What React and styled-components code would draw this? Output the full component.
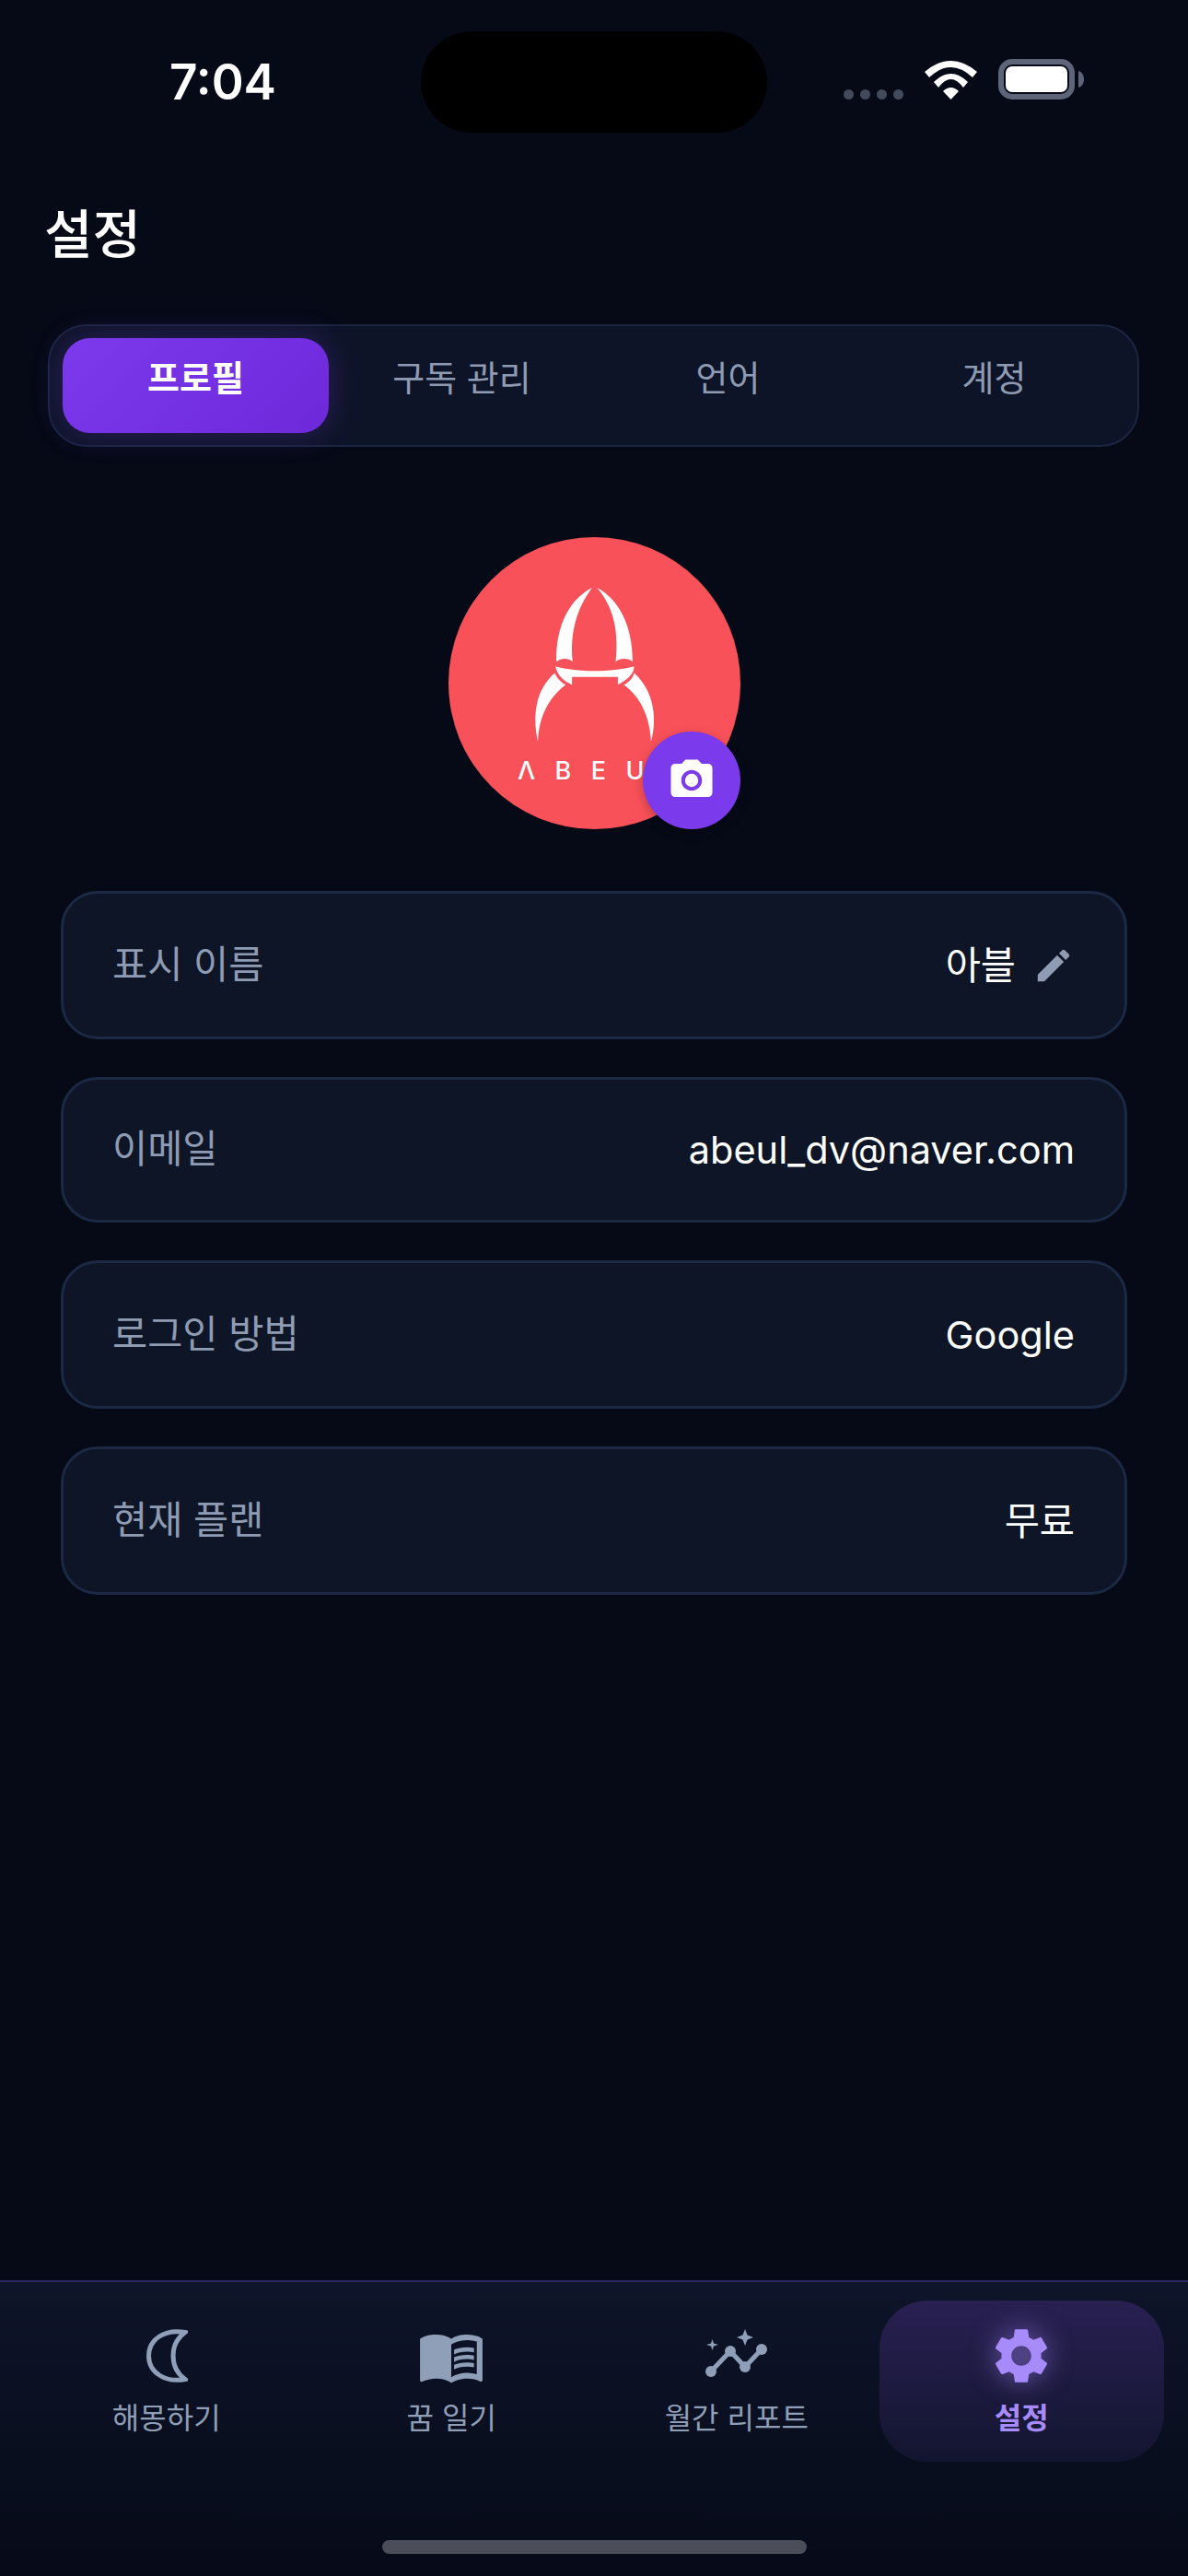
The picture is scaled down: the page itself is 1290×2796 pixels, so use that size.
import styled, { createGlobalStyle } from 'styled-components';
import { MdEdit, MdMenuBook, MdPhotoCamera, MdSettings } from 'react-icons/md';

const GlobalStyle = createGlobalStyle`
  html, body {
    margin: 0;
    padding: 0;
    background: #060a17;
  }
  * {
    box-sizing: border-box;
  }
  body {
    font-family: Inter, "Noto Sans CJK KR", sans-serif;
  }
`;

const Page = styled.div`
  width: 1290px;
  height: 2796px;
  background: #060a17;
  display: flex;
  flex-direction: column;
  overflow: hidden;
`;

const StatusBar = styled.div`
  display: grid;
  grid-template-columns: 457px 376px 1fr;
  align-items: center;
  padding-top: 34px;
  height: 144px;
`;

const Time = styled.div`
  padding-left: 184px;
  font-size: 53px;
  line-height: 60px;
  font-weight: 600;
  color: #fff;
`;

const Island = styled.div`
  height: 110px;
  border-radius: 55px;
  background: #000;
`;

const StatusIcons = styled.div`
  display: flex;
  align-items: flex-end;
  padding-left: 83px;
  height: 44px;
  margin-bottom: 6px;
`;

const Dots = styled.div`
  display: flex;
  gap: 7px;
  margin-right: 23px;
`;

const Dot = styled.span`
  width: 11px;
  height: 11px;
  border-radius: 50%;
  background: #434a5a;
`;

const Wifi = styled.svg`
  display: block;
  width: 57px;
  height: 42px;
  margin-right: 23px;
`;

const Battery = styled.svg`
  display: block;
  width: 94px;
  height: 44px;
`;

const Title = styled.h1`
  margin: 81px 0 0 48px;
  font-size: 57px;
  line-height: 60px;
  font-weight: 500;
  color: #fff;
`;

const Tabs = styled.div`
  display: grid;
  grid-template-columns: repeat(4, 289px);
  margin: 67px 0 0 52px;
  width: 1185px;
  height: 133px;
  padding: 13px 14px;
  background: #0e1428;
  border: 2px solid #1c2542;
  border-radius: 42px;
`;

const Tab = styled.div`
  display: flex;
  align-items: center;
  justify-content: center;
  padding-bottom: 17px;
  font-size: 38px;
  line-height: 48px;
  font-weight: ${(p) => (p.$active ? 700 : 400)};
  color: ${(p) => (p.$active ? '#fff' : '#8f9bb2')};
  border-radius: 30px;
  background: ${(p) => (p.$active ? 'linear-gradient(135deg, #7c3aed, #6d28d9)' : 'transparent')};
  box-shadow: ${(p) => (p.$active ? '0 0 32px rgba(124, 58, 237, 0.28)' : 'none')};
`;

const AvatarWrap = styled.div`
  position: relative;
  width: 317px;
  height: 317px;
  margin: 98px auto 0;
`;

const Avatar = styled.div`
  width: 100%;
  height: 100%;
  border-radius: 50%;
  background: #f95159;
  display: flex;
  flex-direction: column;
  align-items: center;
  padding-top: 55px;
`;

const LogoMark = styled.svg`
  display: block;
  width: 131px;
  height: 167px;
`;

const LogoText = styled.div`
  margin: 17px 7px 0 0;
  font-size: 27px;
  line-height: 30px;
  font-weight: 500;
  letter-spacing: 21.5px;
  color: #fff;
  white-space: nowrap;
`;

const CameraButton = styled.div`
  position: absolute;
  right: 0;
  bottom: 0;
  width: 106px;
  height: 106px;
  border-radius: 50%;
  background: #7c3aed;
  display: flex;
  align-items: center;
  justify-content: center;
  color: #fff;
  font-size: 54px;
  box-shadow: 0 4px 12px rgba(0, 0, 0, 0.25);

  svg {
    display: block;
  }
`;

const Rows = styled.div`
  display: flex;
  flex-direction: column;
  gap: 41px;
  margin: 67px 66px 0;
`;

const Row = styled.div`
  height: ${(p) => p.$h || 161}px;
  display: flex;
  align-items: center;
  justify-content: space-between;
  padding: 0 54px 0 53px;
  background: #0d1526;
  border: 3px solid #1c2945;
  border-radius: 40px;
`;

const Label = styled.div`
  font-size: 41.5px;
  line-height: 50px;
  color: #8f9bb2;
  margin-top: -2px;
`;

const Value = styled.div`
  display: flex;
  align-items: center;
  gap: 18px;
  font-size: 41.5px;
  line-height: 50px;
  color: #fff;
`;

const EditIcon = styled(MdEdit)`
  display: block;
  font-size: 46px;
  color: #8f9bb2;
`;

const Spacer = styled.div`
  flex: 1;
`;

const Nav = styled.div`
  position: relative;
  height: 321px;
  display: grid;
  grid-template-columns: repeat(4, 1fr);
  grid-template-rows: 175px;
  padding: 20px 26px 0;
  border-top: 2px solid #2a2960;
  background: linear-gradient(180deg, #0e1429 0%, #060a18 100%);
`;

const NavItem = styled.div`
  display: flex;
  flex-direction: column;
  align-items: center;
  padding-top: 30px;
  border-radius: 52px;
  background: ${(p) => (p.$active ? 'linear-gradient(180deg, #292052 0%, #12152f 100%)' : 'transparent')};
  color: ${(p) => (p.$active ? '#a78bfa' : '#8f9fb8')};
`;

const NavIcon = styled.div`
  height: 60px;
  display: flex;
  align-items: center;
  justify-content: center;
  filter: ${(p) => (p.$glow ? 'drop-shadow(0 0 14px rgba(167, 139, 250, 0.6))' : 'none')};

  svg {
    display: block;
  }
`;

const NavLabel = styled.div`
  margin-top: 18px;
  font-size: 32px;
  line-height: 40px;
  font-weight: ${(p) => (p.$active ? 700 : 400)};
`;

const HomeIndicator = styled.div`
  position: absolute;
  left: 415px;
  bottom: 24px;
  width: 461px;
  height: 15px;
  border-radius: 8px;
  background: #4b4e58;
`;

const MoonIcon = () => (
  <svg width="46" height="62" viewBox="0 0 46 62" fill="none">
    <path
      d="M43 5.5C21 1.5 3.5 13 3.5 31C3.5 49 21 60.5 43 56.5C34 50 30 41 30 31C30 21 34 12 43 5.5Z"
      stroke="currentColor"
      strokeWidth="5"
    />
  </svg>
);

const ReportIcon = () => (
  <svg width="80" height="60" viewBox="0 0 80 60" fill="currentColor">
    <path d="M12 47L33 25L49 42L67 23" fill="none" stroke="currentColor" strokeWidth="5" />
    <circle cx="12" cy="47" r="6" />
    <circle cx="33" cy="25" r="6" />
    <circle cx="49" cy="42" r="6" />
    <circle cx="67" cy="23" r="6" />
    <path d="M49 1L51.5 7.5L58 10L51.5 12.5L49 19L46.5 12.5L40 10L46.5 7.5Z" />
    <path d="M13.5 12L15 16.5L20 18L15 19.5L13.5 24L12 19.5L7 18L12 16.5Z" />
  </svg>
);

const navItems = [
  { label: '해몽하기', icon: <MoonIcon /> },
  { label: '꿈 일기', icon: <MdMenuBook size={74} /> },
  { label: '월간 리포트', icon: <ReportIcon /> },
  { label: '설정', icon: <MdSettings size={72} />, active: true },
];

const rows = [
  { label: '표시 이름', value: '아블', edit: true },
  { label: '이메일', value: 'abeul_dv@naver.com', h: 158 },
  { label: '로그인 방법', value: 'Google' },
  { label: '현재 플랜', value: '무료' },
];

const tabs = ['프로필', '구독 관리', '언어', '계정'];

export default function App() {
  return (
    <Page>
      <GlobalStyle />
      <StatusBar>
        <Time>7:04</Time>
        <Island />
        <StatusIcons>
          <Dots>
            <Dot />
            <Dot />
            <Dot />
            <Dot />
          </Dots>
          <Wifi viewBox="0 0 57 42" fill="#fff">
            <path d="M0 12Q28.5 -12 57 12L52 18Q28.5 -4 5 18Z" />
            <path d="M10 23Q28.5 5 47 23L42 29Q28.5 11 15 29Z" />
            <path d="M20 33Q28.5 25 37 33L28.5 42Z" />
          </Wifi>
          <Battery viewBox="0 0 94 44">
            <rect x="3" y="3" width="77" height="38" rx="12" fill="none" stroke="#5f6578" strokeWidth="6" />
            <rect x="8" y="8" width="67" height="28" rx="7" fill="#fff" />
            <path d="M87 13C91 14 93 18 93 22C93 26 91 30 87 31Z" fill="#5f6578" />
          </Battery>
        </StatusIcons>
      </StatusBar>

      <Title>설정</Title>

      <Tabs>
        {tabs.map((t, i) => (
          <Tab key={t} $active={i === 0}>{t}</Tab>
        ))}
      </Tabs>

      <AvatarWrap>
        <Avatar>
          <LogoMark viewBox="420 235 392 500" fill="#fff">
            <path d="M608 235C540 270 490 350 492 475C510 462 530 462 545 475C535 380 560 300 608 235Z" />
            <path d="M625 235C690 270 740 350 740 475C725 462 700 462 685 475C695 380 680 300 625 235Z" />
            <path d="M489 490C560 510 670 510 745 490C745 510 730 530 692 550L692 525C650 525 590 525 543 525L543 550C510 535 495 515 489 490Z" />
            <path d="M487 512C495 530 505 540 522 550C470 590 435 650 432 735C415 660 420 570 487 512Z" />
            <path d="M745 512C740 530 728 542 712 550C765 590 795 650 800 735C820 660 810 570 745 512Z" />
          </LogoMark>
          <LogoText>ΛBEU</LogoText>
        </Avatar>
        <CameraButton>
          <MdPhotoCamera />
        </CameraButton>
      </AvatarWrap>

      <Rows>
        {rows.map((r) => (
          <Row key={r.label} $h={r.h}>
            <Label>{r.label}</Label>
            <Value>
              {r.value}
              {r.edit && <EditIcon />}
            </Value>
          </Row>
        ))}
      </Rows>

      <Spacer />

      <Nav>
        {navItems.map((n) => (
          <NavItem key={n.label} $active={n.active}>
            <NavIcon $glow={n.active}>{n.icon}</NavIcon>
            <NavLabel $active={n.active}>{n.label}</NavLabel>
          </NavItem>
        ))}
        <HomeIndicator />
      </Nav>
    </Page>
  );
}
